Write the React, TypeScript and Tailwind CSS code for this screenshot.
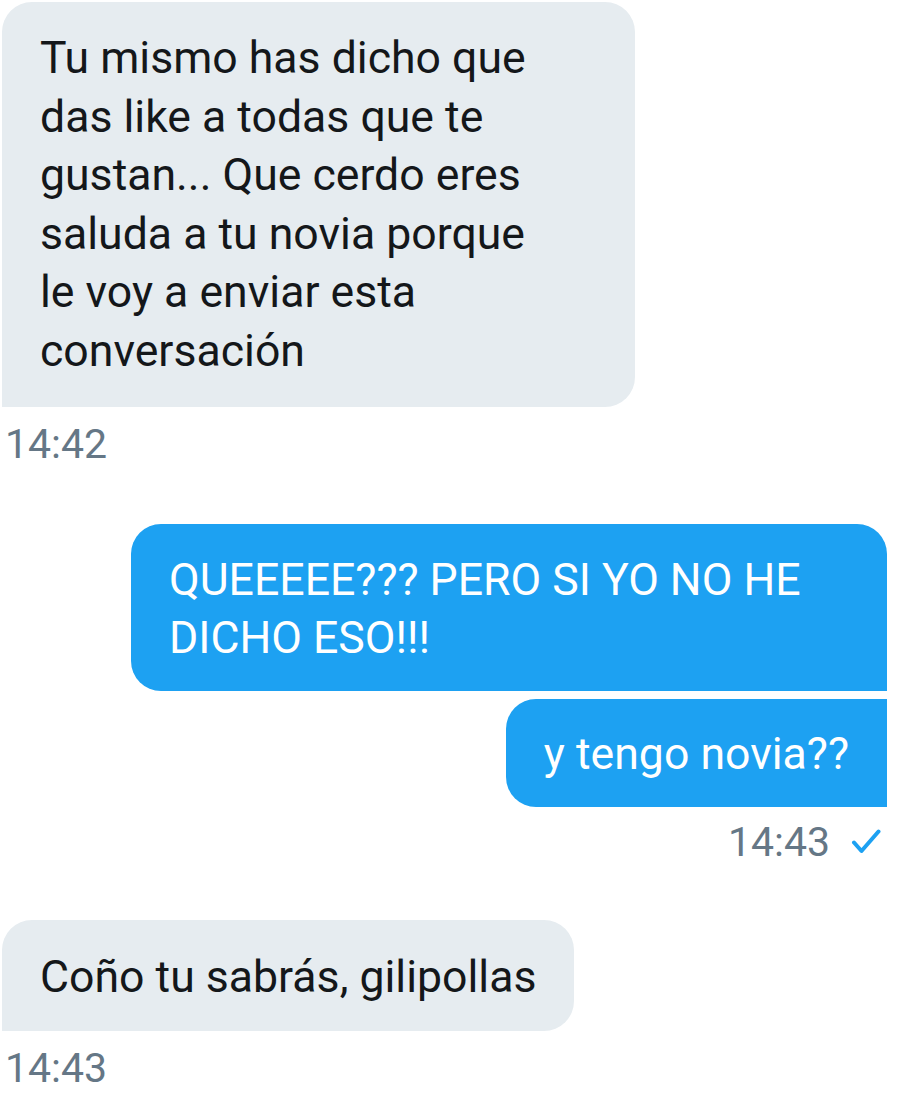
import React from "react";

type BubbleProps = {
  side: "in" | "out";
  lines: string[];
  rounded: string;
  pad: string;
};

function Bubble({ side, lines, rounded, pad }: BubbleProps) {
  const colors =
    side === "in" ? "bg-[#e6ecf0] text-[#14171a]" : "bg-[#1da1f2] text-white";
  return (
    <div className={`${colors} ${rounded} ${pad} px-[38px] text-[44.6px] leading-[58.6px]`}>
      {lines.map((l, i) => (
        <div key={i} className="whitespace-nowrap">
          {l}
        </div>
      ))}
    </div>
  );
}

function Stamp({ time, read }: { time: string; read?: boolean }) {
  return (
    <div className="flex items-center gap-[21px] text-[41px] leading-[48px] text-[#657786]">
      <span>{time}</span>
      {read && (
        <svg width="30" height="26" viewBox="0 0 30 26" fill="none" stroke="#1da1f2" strokeWidth="4" strokeLinecap="round" strokeLinejoin="round">
          <path d="M3 13.5 L10.5 22 L27.5 2.5" />
        </svg>
      )}
    </div>
  );
}

export default function App() {
  return (
    <div
      className="w-[904px] h-[1108px] bg-white overflow-hidden"
      style={{ fontFamily: "Roboto, 'Noto Sans', sans-serif" }}
    >
      <div className="flex flex-col pt-[2px] pl-[2px] pr-[17px]">
        {/* incoming */}
        <div className="flex flex-col items-start">
          <div className="w-[633px]">
            <Bubble
              side="in"
              rounded="rounded-t-[30px] rounded-br-[30px]"
              pad="pt-[27px] pb-[26px]"
              lines={[
                "Tu mismo has dicho que",
                "das like a todas que te",
                "gustan... Que cerdo eres",
                "saluda a tu novia porque",
                "le voy a enviar esta",
                "conversación",
              ]}
            />
          </div>
          <div className="mt-[13px] ml-[3px]">
            <Stamp time="14:42" />
          </div>
        </div>

        {/* outgoing */}
        <div className="mt-[56px] flex flex-col items-end">
          <div className="w-[756px]">
            <Bubble
              side="out"
              rounded="rounded-t-[30px] rounded-bl-[30px]"
              pad="pt-[27px] pb-[23px]"
              lines={["QUEEEEE??? PERO SI YO NO HE", "DICHO ESO!!!"]}
            />
          </div>
          <div className="mt-[8px]">
            <Bubble
              side="out"
              rounded="rounded-l-[30px]"
              pad="pt-[26px] pb-[24px]"
              lines={["y tengo novia??"]}
            />
          </div>
          <div className="mt-[11px] mr-[6px]">
            <Stamp time="14:43" read />
          </div>
        </div>

        {/* incoming */}
        <div className="mt-[54px] flex flex-col items-start">
          <Bubble
            side="in"
            rounded="rounded-t-[30px] rounded-br-[30px]"
            pad="pt-[28px] pb-[24px]"
            lines={["Coño tu sabrás, gilipollas"]}
          />
          <div className="mt-[13px] ml-[3px]">
            <Stamp time="14:43" />
          </div>
        </div>
      </div>
    </div>
  );
}
